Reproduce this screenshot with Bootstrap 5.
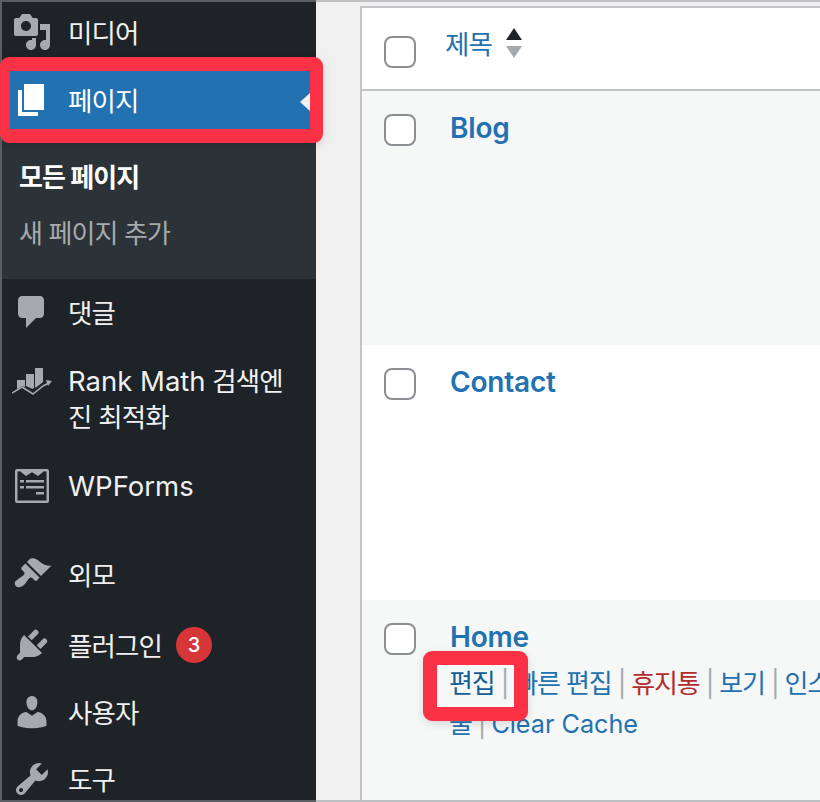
<!DOCTYPE html>
<html lang="ko">
<head>
<meta charset="utf-8">
<title>페이지</title>
<link rel="stylesheet" href="https://cdn.jsdelivr.net/npm/bootstrap@5.3.0/dist/css/bootstrap.min.css">
<style>
html,body{height:802px;overflow:hidden;margin:0}
body{font-family:Inter,"Noto Sans CJK KR",sans-serif;background:#f0f0f1;position:relative}
.shell{height:802px}
.side{width:316px;flex:none;background:#1d2327;color:#f0f0f1;border:solid #5c5f62;border-width:2px 0 2px 2px;overflow:hidden;font-size:26.5px;line-height:36px;letter-spacing:-.85px}
.lat{font-size:27.5px;letter-spacing:0}
.nav-row{padding-left:10px;color:#f0f0f1;text-decoration:none;position:relative}
.nav-row svg{width:40px;height:40px;fill:#a7aaad;flex:none}
.nav-text{margin-left:16px;padding-top:2px}
.nav-text.flat{padding-top:0}
.h-media{height:60px;margin-bottom:9px}
.h-page{height:58px;background:#2271b1;color:#fff}
.h-page svg{fill:#fff}
.h-comment{height:66px}
.h-rank{height:112px;padding-top:18px;align-items:flex-start}
.h-forms{height:58px}
.h-appear{height:58px;margin-top:30px}
.h-plugin{height:84px}
.h-user{height:50px}
.h-tools{height:84px}
.nav-arrow{position:absolute;right:6px;top:22px;width:0;height:0;border:9px solid transparent;border-right:10px solid #f0f0f1;border-left:0}
.sub-box{height:150px;background:#2c3338;padding:21px 0 17px 17px}
.sub-item{height:56px;display:flex;align-items:center;color:#a7aaad;font-size:26px;letter-spacing:-.9px}
.sub-item.on{color:#fff;font-weight:700}
.num-pill{width:36px;height:36px;border-radius:50%;background:#d63638;color:#fff;font-size:20px;letter-spacing:0;font-weight:500;margin-left:14px}
.body-area{flex:1;min-width:0;padding-top:4px;border:solid #bfc0c2;border-width:2px 0;padding-left:44px;overflow:hidden}
.sheet{background:#fff;border:solid #c3c4c7;border-width:2px 0 0 2px;width:460px;height:794px}
.head-row{height:83px;border-bottom:2px solid #c3c4c7;padding:28px 0 0 22px;background:#fff}
.tick{width:32px;height:32px;border:2px solid #8c8f94;border-radius:8px;background:#fff;flex:none}
.sort-link{color:#2271b1;text-decoration:none;font-size:26.5px;line-height:34px;letter-spacing:-.85px;margin:-9px 0 0 29px}
.sort-arrows{margin:-8px 0 0 14px;width:16px;gap:6px}
.tri-up,.tri-down{width:0;height:0;border-left:8px solid transparent;border-right:8px solid transparent}
.tri-up{border-bottom:12px solid #1d2327}
.tri-down{border-top:12px solid #a7aaad}
.page-row{padding:23px 0 0 22px;position:relative}
.r1{height:254px;background:#f6f7f7}
.r2{height:255px;background:#fff}
.r3{height:200px;background:#f6f7f7}
.title-link{display:block;color:#2271b1;font-weight:600;font-size:28px;line-height:34px;text-decoration:none;letter-spacing:-.2px;margin:-3px 0 0 34px}
.acts{font-size:26px;line-height:40px;color:#2271b1;white-space:nowrap;margin-left:33px;letter-spacing:-1.1px;margin-top:10px}
.acts .lat{font-size:25.2px}
.acts a{color:#2271b1;text-decoration:none}
.acts a.dark{color:#135e96}
.acts a.trash{color:#b32d2e}
.acts .bar{color:#a7aaad;margin:0 6px}
.mark-box{position:absolute;border:solid #fb3145;border-radius:9px;pointer-events:none;box-shadow:0 3px 10px rgba(0,0,0,.12)}
.mark-a{left:0;top:57px;width:323px;height:86px;border-width:14px 13px 14px 10px}
.mark-b{left:423px;top:651px;width:105px;height:70px;border-width:14px}
</style>
</head>
<body>
<div class="shell d-flex">
  <nav class="side">
    <a class="nav-row h-media d-flex align-items-center" href="#"><svg viewBox="0 0 20 20"><path d="M13 11V4c0-.55-.45-1-1-1h-1.670L9 1H5L3.670 3H2c-.55 0-1 .45-1 1v7c0 .55.45 1 1 1h10c.55 0 1-.45 1-1zM7 4.500c1.380 0 2.500 1.120 2.500 2.500S8.380 9.500 7 9.500 4.500 8.380 4.500 7 5.620 4.500 7 4.500zM14 6h5v10.500c0 1.380-1.120 2.500-2.500 2.500S14 17.880 14 16.500s1.120-2.500 2.500-2.500c.17 0 .34.02.5.05V9h-3V6zm-4 8.050V13h2v3.500c0 1.380-1.120 2.500-2.500 2.500S7 17.880 7 16.500 8.120 14 9.500 14c.17 0 .34.020.5.050z"/></svg><span class="nav-text">미디어</span></a>
    <a class="nav-row h-page d-flex align-items-center" href="#"><svg viewBox="0 0 20 20"><path d="M6 15V2h10v13H6zm-1 1h8v2H3V5h2v11z"/></svg><span class="nav-text">페이지</span><span class="nav-arrow"></span></a>
    <div class="sub-box">
      <div class="sub-item on">모든 페이지</div>
      <div class="sub-item">새 페이지 추가</div>
    </div>
    <a class="nav-row h-comment d-flex align-items-center" href="#"><svg viewBox="0 0 20 20"><path d="M5 2h9c1.100 0 2 .9 2 2v7c0 1.100-.9 2-2 2h-2l-5 5v-5H5c-1.100 0-2-.9-2-2V4c0-1.100.9-2 2-2z"/></svg><span class="nav-text">댓글</span></a>
    <a class="nav-row h-rank d-flex" href="#"><svg viewBox="0 0 40 40"><path d="M5 17h8v7l-3-1-5 3zM14 11h8v14l-1.500 1L14 23zM23 5h8v14l-5 4-3 2z"/><path d="M0 30l10-6 11 7 10-8 6-3" fill="none" stroke="#a7aaad" stroke-width="1.500"/><path d="M34 17l6 1-4 5z"/></svg><span class="nav-text flat"><span class="lat">Rank Math</span> 검색엔<br>진 최적화</span></a>
    <a class="nav-row h-forms d-flex align-items-center" href="#"><svg viewBox="0 0 40 40"><path d="M5 3h30a2 2 0 0 1 2 2v30a2 2 0 0 1-2 2H5a2 2 0 0 1-2-2V5a2 2 0 0 1 2-2zm.500 2.500v29h29v-29h-4l-4.500 4-6-3.500-6 3.500-4.500-4z" fill-rule="evenodd"/><path d="M9 4l5 4 6-4 6 4 5-4v2l-5 4-6-4-6 4-5-4zM8 14h4v2.500H8zM14 14h18v2.500H14zM8 20h4v2.500H8zM14 20h18v2.500H14zM24 26h8v2.500h-8z"/></svg><span class="nav-text flat lat">WPForms</span></a>
    <a class="nav-row h-appear d-flex align-items-center" href="#"><svg viewBox="0 0 20 20"><path d="M14.480 11.060L7.410 3.990l1.500-1.500c.5-.56 2.300-.47 3.510.32 1.210.8 1.430 1.280 2.910 2.100 1.180.64 2.450 1.260 4.450.85zm-.71.71L6.700 4.700 4.930 6.470c-.39.39-.39 1.020 0 1.410l1.060 1.060c.39.39.39 1.030 0 1.420-.6.6-1.430 1.110-2.210 1.690-.35.26-.7.53-1.010.84C1.430 13.230.91 15 1.980 16.070c1.070 1.070 2.830.55 4.200-.82.31-.31.58-.66.84-1.010.58-.78 1.090-1.610 1.690-2.210.39-.39 1.030-.39 1.420 0l1.060 1.060c.39.39 1.020.39 1.410 0z"/></svg><span class="nav-text">외모</span></a>
    <a class="nav-row h-plugin d-flex align-items-center" href="#"><svg viewBox="0 0 20 20"><path d="M13.110 4.360L9.870 7.600 8 5.730l3.240-3.240c.35-.34 1.050-.2 1.560.32.52.51.66 1.210.31 1.550zm-8 1.770l.91-1.120 9.010 9.010-1.190.84c-.71.71-2.630 1.160-3.820 1.160H6.140L4.900 17.260c-.59.59-1.540.59-2.120 0-.59-.58-.59-1.530 0-2.120l1.240-1.240v-3.880c0-1.130.4-3.190 1.090-3.890zm7.260 3.970l3.240-3.240c.34-.35 1.040-.21 1.550.31.52.51.66 1.210.31 1.550l-3.240 3.250z"/></svg><span class="nav-text">플러그인</span><span class="num-pill d-flex align-items-center justify-content-center">3</span></a>
    <a class="nav-row h-user d-flex align-items-center" href="#"><svg viewBox="0 0 20 20"><path d="M10 9.250c-2.270 0-2.730-3.440-2.730-3.440C7 4.020 7.820 2 9.970 2c2.160 0 2.980 2.020 2.710 3.810 0 0-.41 3.440-2.680 3.440zm0 2.570L12.720 10c2.390 0 4.520 2.330 4.520 4.530v2.490s-3.650 1.130-7.240 1.130c-3.650 0-7.240-1.130-7.240-1.130v-2.490c0-2.250 1.940-4.480 4.470-4.480z"/></svg><span class="nav-text">사용자</span></a>
    <a class="nav-row h-tools d-flex align-items-center" href="#"><svg viewBox="0 0 20 20"><path d="M16.680 9.770c-1.340 1.340-3.300 1.670-4.950.99l-5.410 6.520c-.99.99-2.590.99-3.580 0s-.99-2.590 0-3.570l6.520-5.420c-.68-1.650-.35-3.610.99-4.950 1.280-1.280 3.120-1.620 4.720-1.060l-2.890 2.890 2.820 2.820 2.860-2.870c.53 1.580.18 3.390-1.080 4.650zM3.810 16.210c.4.39 1.040.39 1.430 0 .4-.4.4-1.040 0-1.430-.39-.4-1.030-.4-1.430 0-.39.39-.39 1.030 0 1.430z"/></svg><span class="nav-text">도구</span></a>
  </nav>
  <main class="body-area">
    <div class="sheet">
      <div class="head-row d-flex align-items-start">
        <span class="tick"></span>
        <a class="sort-link" href="#">제목</a>
        <span class="sort-arrows d-flex flex-column"><span class="tri-up"></span><span class="tri-down"></span></span>
      </div>
      <div class="page-row r1 d-flex align-items-start"><span class="tick"></span><div><a class="title-link" href="#">Blog</a></div></div>
      <div class="page-row r2 d-flex align-items-start"><span class="tick"></span><div><a class="title-link" href="#">Contact</a></div></div>
      <div class="page-row r3 d-flex align-items-start"><span class="tick"></span><div>
        <a class="title-link" href="#">Home</a>
        <div class="acts">
          <div><a class="dark" href="#">편집</a><span class="bar">|</span><a href="#">빠른 편집</a><span class="bar">|</span><a class="trash" href="#">휴지통</a><span class="bar">|</span><a href="#">보기</a><span class="bar">|</span><a href="#">인스</a></div>
          <div><a href="#">물</a><span class="bar">|</span><a class="lat" href="#">Clear Cache</a></div>
        </div>
      </div></div>
    </div>
  </main>
</div>
<div class="mark-box mark-a"></div>
<div class="mark-box mark-b"></div>
</body>
</html>
